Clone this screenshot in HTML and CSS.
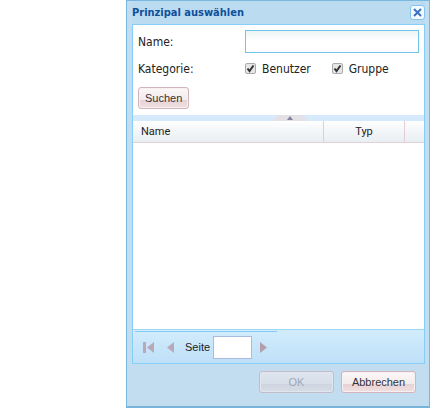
FILE: index.html
```html
<!DOCTYPE html>
<html lang="de">
<head>
<meta charset="utf-8">
<title>Prinzipal auswählen</title>
<link rel="stylesheet" href="styles.css">
</head>
<body>
<section class="dialog" role="dialog" aria-labelledby="title">
  <header class="titlebar">
    <h1 id="title">Prinzipal auswählen</h1>
    <button class="close" type="button" aria-label="Schließen">
      <svg width="9" height="9" viewBox="0 0 9 9"><path d="M1 1L8 8M8 1L1 8" stroke="#3d70bf" stroke-width="2"/></svg>
    </button>
  </header>
  <div class="panel">
    <form class="search">
      <div class="row">
        <label class="caption" for="name">Name:</label>
        <input class="field" id="name" type="text">
      </div>
      <div class="row">
        <span class="caption">Kategorie:</span>
        <div class="checks">
          <label class="check"><input type="checkbox" checked>Benutzer</label>
          <label class="check"><input type="checkbox" checked>Gruppe</label>
        </div>
      </div>
      <button class="button search-button" type="button">Suchen</button>
    </form>
    <div class="splitter">
      <svg width="36" height="6" viewBox="0 0 36 6"><path d="M0 6L6 0H30L36 6Z" fill="#e3e0e6"/><path d="M15 5L18 1L21 5Z" fill="#85829b"/></svg>
    </div>
    <div class="list">
      <table class="grid">
        <colgroup><col><col class="col-type"><col class="col-end"></colgroup>
        <thead><tr><th class="first">Name</th><th>Typ</th><th></th></tr></thead>
      </table>
    </div>
    <nav class="pager">
      <div class="pages">
        <button class="nav" type="button" aria-label="Erste Seite">
          <svg width="12" height="13" viewBox="0 0 12 13"><path d="M0 1H3V12H0ZM11 1V12L4 6.500Z" fill="#b9a9b8"/></svg>
        </button>
        <button class="nav" type="button" aria-label="Vorherige Seite">
          <svg width="12" height="13" viewBox="0 0 12 13"><path d="M10 1V12L3 6.500Z" fill="#b9a9b8"/></svg>
        </button>
        <label class="page-label" for="page">Seite</label>
        <input class="page-input" id="page" type="text">
        <button class="nav" type="button" aria-label="Nächste Seite">
          <svg width="12" height="13" viewBox="0 0 12 13"><path d="M3 1V12L10 6.500Z" fill="#b39fac"/></svg>
        </button>
      </div>
    </nav>
  </div>
  <footer class="actions">
    <button class="button wide" type="button" disabled>OK</button>
    <button class="button wide" type="button">Abbrechen</button>
  </footer>
</section>
</body>
</html>
```
FILE: styles.css
```css
* { box-sizing: border-box; }

body {
  margin: 0;
  background: #fff;
  color: #222;
  font: 12px/16px "DejaVu Sans Condensed", "Noto Sans", sans-serif;
}

.dialog {
  margin: 0 7px 0 126px;
  padding: 0 4px 0 5px;
  border: 1px solid #78b8df;
  border-bottom: 2px solid #78b4da;
  background: #c2ddf0;
}

.titlebar {
  display: flex;
  align-items: center;
  justify-content: space-between;
  height: 23px;
  background: #bbdbf0;
}

h1 {
  margin: 0;
  color: #10509b;
  font-size: 11px;
  line-height: 16px;
}

button, input { font: inherit; margin: 0; }

.close {
  display: flex;
  align-items: center;
  justify-content: center;
  width: 15px;
  height: 15px;
  padding: 0;
  border: 1px solid #83c4ee;
  border-radius: 3px;
  background: #f3fbff;
}

.panel { border: 1px solid #86cdf8; background: #fff; }

.search {
  display: flex;
  flex-direction: column;
  gap: 4px;
  padding: 5px;
  height: 90px;
}

.row { display: flex; align-items: center; min-height: 23px; }
.caption { flex: 0 0 107px; }

.field {
  flex: 1;
  min-width: 0;
  height: 23px;
  border: 1px solid #72c6ec;
  background: linear-gradient(#ecf5f4, #fff 10px);
}

.checks { display: flex; gap: 21px; }
.check { display: flex; align-items: center; gap: 6px; }

.check input {
  appearance: none;
  width: 11px;
  height: 11px;
  border: 1px solid #aaa;
  border-radius: 2px;
  background: url('data:image/svg+xml,<svg xmlns="http://www.w3.org/2000/svg" viewBox="0 0 9 9"><path d="M1.500 4.500L3.500 7L7.500 1.500" fill="none" stroke="%23333" stroke-width="2"/></svg>') #e6e6e6;
}

.button {
  height: 22px;
  padding: 0 6px;
  border: 1px solid #d0b5be;
  border-radius: 3px;
  background: linear-gradient(#fbf7f7, #f3ebed 60%, #e7d3d6 60%, #f0dfe1);
  box-shadow: inset 0 0 0 1px #f8eff0;
  color: #333;
  font: 11px/16px "Liberation Sans", sans-serif;
}

.search-button { align-self: flex-start; margin-top: 3px; }

.button:disabled {
  border-color: #c5bcc9;
  background: linear-gradient(#dfe5ee, #d9dfe9 60%, #cfd5e0 60%, #d6dde7);
  box-shadow: inset 0 0 0 1px #e2e7ef;
  color: #9ca8b5;
}

.splitter {
  display: flex;
  justify-content: center;
  height: 6px;
  padding-left: 22px;
  background: #d6eafb;
}

.list { height: 208px; }

.grid {
  width: 100%;
  border-collapse: separate;
  border-spacing: 0;
  table-layout: fixed;
  font: 11px/16px Roboto, sans-serif;
}

.col-type { width: 81px; }
.col-end { width: 19px; }

th {
  height: 22px;
  padding: 0;
  border-right: 1px solid #e5ccd2;
  border-bottom: 1px solid #e6d0d8;
  background: linear-gradient(#fff, #f6f8fa 35%, #e8eff3);
  font-weight: normal;
}
th.first { padding-left: 8px; text-align: left; }
th:last-child { border-right: 0; }

.pager {
  height: 34px;
  border-top: 1px solid #9dd7f6;
  background: linear-gradient(#d2ecfc, #bee0f8);
  font: 11px/16px "Liberation Sans", sans-serif;
}

.pages {
  display: flex;
  align-items: center;
  width: 142px;
  height: 31px;
  margin: 1px 0 0 2px;
  padding-left: 8px;
  border-top: 1px solid #83caf3;
}

.nav {
  display: flex;
  flex: none;
  width: 12px;
  padding: 0;
  border: 0;
  background: none;
}
.nav + .nav { margin-left: 9px; }
.page-label { margin: 0 3px 0 9px; }

.page-input {
  width: 39px;
  height: 23px;
  margin-right: 5px;
  border: 1px solid #a9bce0;
  background: #fff;
}

.actions {
  display: flex;
  justify-content: flex-end;
  gap: 7px;
  padding: 7px 9px 13px 0;
}
.wide { width: 75px; }
```
